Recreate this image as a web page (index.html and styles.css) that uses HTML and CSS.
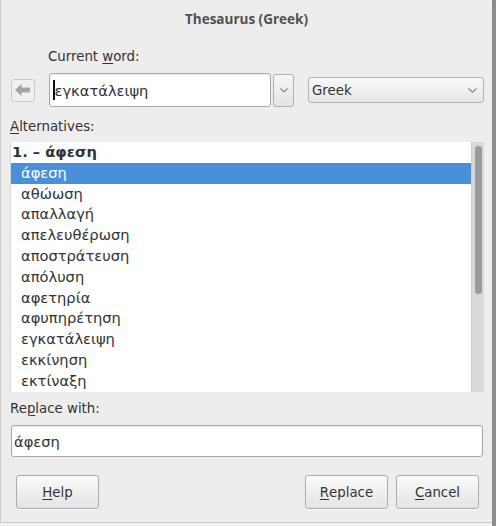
FILE: index.html
```html
<!DOCTYPE html>
<html>
<head>
<meta charset="utf-8">
<link rel="stylesheet" href="styles.css">
</head>
<body>
<div class="screen">
  <div class="window">
    <div class="titlebar">Thesaurus (Greek)</div>
    <div class="label current-label">Current <u>w</u>ord:</div>
    <div class="word-row">
      <div class="back-btn">
        <svg width="16" height="12" viewBox="0 0 16 12"><path d="M0 6 L6.5 0 L6.5 3.5 L15 3.5 L15 8.5 L6.5 8.5 L6.5 12 Z" fill="#a3a3a3"/></svg>
      </div>
      <div class="entry word-entry"><span class="cursor"></span><span class="etext">εγκατάλειψη</span></div>
      <div class="drop-btn">
        <svg width="8" height="5" viewBox="0 0 8 5"><path d="M0.5 0.5 L4 4 L7.5 0.5" fill="none" stroke="#8a8a8a" stroke-width="1.2"/></svg>
      </div>
      <div class="combo">
        <span>Greek</span>
        <svg width="9" height="5" viewBox="0 0 9 5"><path d="M0.5 0.5 L4.5 4.2 L8.5 0.5" fill="none" stroke="#8a8a8a" stroke-width="1.2"/></svg>
      </div>
    </div>
    <div class="label alt-label"><u>A</u>lternatives:</div>
    <div class="listbox">
      <div class="list">
        <div class="row head">1. – άφεση</div>
        <div class="row item selected">άφεση</div>
        <div class="row item">αθώωση</div>
        <div class="row item">απαλλαγή</div>
        <div class="row item">απελευθέρωση</div>
        <div class="row item">αποστράτευση</div>
        <div class="row item">απόλυση</div>
        <div class="row item">αφετηρία</div>
        <div class="row item">αφυπηρέτηση</div>
        <div class="row item">εγκατάλειψη</div>
        <div class="row item">εκκίνηση</div>
        <div class="row item">εκτίναξη</div>
      </div>
      <div class="scrollbar"><div class="slider"></div></div>
    </div>
    <div class="label rep-label">Re<u>p</u>lace with:</div>
    <div class="entry rep-entry">άφεση</div>
    <div class="buttons">
      <div class="btn"><u>H</u>elp</div>
      <div class="spacer"></div>
      <div class="btn"><u>R</u>eplace</div>
      <div class="btn"><u>C</u>ancel</div>
    </div>
  </div>
  <div class="edge"></div>
</div>
</body>
</html>
```
FILE: styles.css
```css
* { box-sizing: border-box; }
html, body { margin: 0; padding: 0; }
body {
  width: 496px;
  height: 526px;
  overflow: hidden;
  background: #f3f3f3;
  font-family: "DejaVu Sans", sans-serif;
  color: #2e3436;
}
.screen {
  display: flex;
  height: 523px;
}
.window {
  width: 492px;
  height: 523px;
  background: #ededed;
  border-left: 1px solid #cfcfcf;
  border-bottom: 1px solid #c9c9c9;
  display: flex;
  flex-direction: column;
  padding: 0 8px 0 8px;
  border-top-right-radius: 6px;
}
.edge {
  width: 4px;
  height: 526px;
  background: #8d8d8d;
}
.titlebar {
  height: 38px;
  line-height: 38px;
  text-align: center;
  font-family: "Open Sans", sans-serif;
  font-weight: 700;
  font-size: 13.5px;
  color: #4f524e;
  margin: 0 -8px;
}
.label {
  font-size: 13.33px;
  line-height: 16px;
  color: #333;
}
.label u { text-decoration-thickness: 1px; text-underline-offset: 2px; }
.current-label { margin-top: 11px; padding-left: 39px; }
.word-row {
  display: flex;
  align-items: center;
  margin-top: 8px;
  height: 34px;
}
.back-btn {
  width: 24px;
  height: 23px;
  margin-left: 2px;
  border: 1px solid #cbcbcb;
  border-radius: 3px;
  background: #f0f0f0;
  display: flex;
  align-items: center;
  justify-content: center;
}
.entry {
  background: #fff;
  border: 1px solid #a8a8a8;
  border-radius: 3px;
  box-shadow: inset 0 1px 1px rgba(0,0,0,0.08);
  font-size: 14.67px;
  color: #2e3436;
  display: flex;
  align-items: center;
  white-space: nowrap;
}
.word-entry {
  width: 222px;
  height: 34px;
  margin-left: 14px;
  padding-left: 3px;
}
.cursor {
  display: inline-block;
  width: 1.5px;
  height: 20px;
  background: #111;
}
.drop-btn {
  width: 21px;
  height: 33px;
  margin-left: 2px;
  border: 1px solid #b0b0b0;
  border-radius: 3px;
  background: linear-gradient(#f7f7f7, #e3e3e3);
  display: flex;
  align-items: center;
  justify-content: center;
}
.combo {
  width: 176px;
  height: 26px;
  margin-left: 14px;
  border: 1px solid #b3b3b3;
  border-radius: 3px;
  background: linear-gradient(#f8f8f8, #e6e6e6);
  display: flex;
  align-items: center;
  justify-content: space-between;
  padding: 0 6px 0 3px;
  font-size: 13.33px;
  color: #333;
}
.alt-label { margin-top: 12px; padding-left: 1px; }
.listbox {
  margin-top: 7px;
  margin-left: 1px;
  width: 474px;
  height: 250px;
  display: flex;
  background: #fff;
  border-left: 1px solid #d6d6d6;
}
.list {
  flex: 1;
  overflow: hidden;
}
.row {
  height: 20.8px;
  line-height: 20.8px;
  font-size: 14.67px;
  white-space: nowrap;
  color: #2e3436;
}
.head { font-weight: 700; padding-left: 1px; }
.item { padding-left: 10px; }
.selected { background: #4a8fd9; color: #fff; }
.scrollbar {
  width: 13px;
  height: 250px;
  background: #d9d9d9;
  border-left: 1px solid #cfcfcf;
  padding: 4px 0 0 3px;
}
.slider {
  width: 7px;
  height: 148px;
  background: #9b9b9b;
  border-radius: 3px;
}
.rep-label { margin-top: 9px; padding-left: 1px; }
.rep-entry {
  margin-top: 8px;
  margin-left: 2px;
  width: 472px;
  height: 32px;
  padding-left: 2px;
}
.buttons {
  display: flex;
  margin-top: 18px;
  padding-left: 7px;
  gap: 8px;
  width: 470px;
}
.spacer { flex: 1; }
.btn {
  width: 83px;
  height: 34px;
  border: 1px solid #adadad;
  border-radius: 3px;
  background: linear-gradient(#fafafa, #e4e4e4);
  box-shadow: 0 1px 0 rgba(255,255,255,0.6);
  display: flex;
  align-items: center;
  justify-content: center;
  font-size: 13.33px;
  color: #333;
}
.btn u { text-decoration-thickness: 1px; text-underline-offset: 2px; }
```
